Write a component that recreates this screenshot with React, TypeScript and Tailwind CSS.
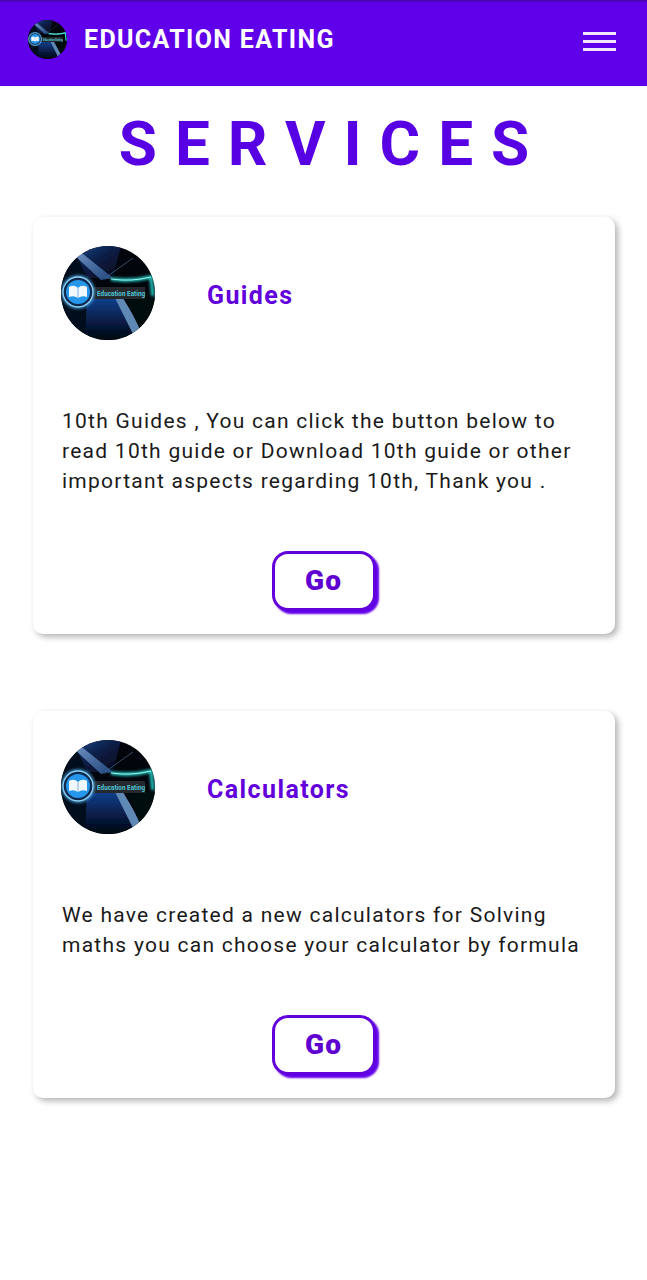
const services = [
  {
    title: 'Guides',
    lines: [
      '10th Guides , You can click the button below to',
      'read 10th guide or Download 10th guide or other',
      'important aspects regarding 10th, Thank you .',
    ],
  },
  {
    title: 'Calculators',
    lines: [
      'We have created a new calculators for Solving',
      'maths you can choose your calculator by formula',
    ],
  },
]

// Round site logo: dark panels, glowing book badge and name plate
function Logo({ id, className }: { id: string; className: string }) {
  return (
    <svg viewBox="0 0 94 94" className={className}>
      <defs>
        <clipPath id={`${id}-clip`}>
          <circle cx="47" cy="47" r="47" />
        </clipPath>
        <linearGradient id={`${id}-top`} x1="0" y1="0" x2="1" y2="1">
          <stop offset="0" stopColor="#1d4a8c" />
          <stop offset="0.5" stopColor="#0a1c44" />
          <stop offset="1" stopColor="#040814" />
        </linearGradient>
        <linearGradient id={`${id}-low`} x1="0" y1="0" x2="0" y2="1">
          <stop offset="0" stopColor="#12408c" />
          <stop offset="0.6" stopColor="#071a40" />
          <stop offset="1" stopColor="#02050f" />
        </linearGradient>
        <linearGradient id={`${id}-stripe`} x1="0" y1="0" x2="1" y2="1">
          <stop offset="0" stopColor="#7f9fd0" />
          <stop offset="1" stopColor="#24508c" />
        </linearGradient>
        <filter id={`${id}-glow`} x="-30%" y="-30%" width="160%" height="160%">
          <feGaussianBlur stdDeviation="1.4" />
        </filter>
        <filter id={`${id}-soft`} x="-10%" y="-10%" width="120%" height="120%">
          <feGaussianBlur stdDeviation="0.5" />
        </filter>
      </defs>
      <g clipPath={`url(#${id}-clip)`}>
        <rect width="94" height="94" fill="#03050c" />
        <g filter={`url(#${id}-soft)`}>
          <polygon points="10,0 60,0 52,32 24,32" fill={`url(#${id}-top)`} />
          <polygon points="0,20 16,10 40,60 28,94 0,94" fill="#040a1c" />
          <polygon points="26,52 58,52 76,94 24,94" fill={`url(#${id}-low)`} />
          <polygon points="12,8 22,8 52,32 40,34" fill={`url(#${id}-stripe)`} opacity="0.85" />
          <polygon points="54,52 62,52 82,86 74,92" fill="#5f88b4" />
          <polygon points="64,52 94,52 94,94 84,94" fill="#04070f" />
        </g>
        <path d="M44 32 L72 12" stroke="#4a6a86" strokeWidth="0.7" />
        <path d="M50 33 Q70 36 90 31 L92 50" fill="none" stroke="#28e0d8" strokeWidth="3" filter={`url(#${id}-glow)`} />
        <path d="M50 33 Q70 36 90 31" fill="none" stroke="#a8fff6" strokeWidth="0.9" />
        <path d="M68 56 L88 56" fill="none" stroke="#18a8b8" strokeWidth="1.6" filter={`url(#${id}-glow)`} />
        <rect x="30" y="41" width="54" height="12" fill="#25292d" />
        <text x="36" y="49.5" fontSize="6.4" fontWeight="700" fontFamily="Roboto, sans-serif" fill="#4fc4d4">
          Education Eating
        </text>
        <circle cx="17" cy="46" r="17" fill="#4db4f2" opacity="0.7" filter={`url(#${id}-glow)`} />
        <circle cx="17" cy="46" r="15" fill="#0f2a4e" stroke="#8fcdf5" strokeWidth="1.4" />
        <circle cx="17" cy="46" r="12" fill="#2596ea" />
        <path d="M8 41 Q13 38 17 42 Q21 38 26 41 V51 Q21 49 17 52 Q13 49 8 51 Z" fill="#f2f8ff" />
        <path d="M17 42 V52" stroke="#7eb4e4" strokeWidth="1" />
        <path d="M17 62 V80" stroke="#8fc8f0" strokeWidth="1.6" opacity="0.6" filter={`url(#${id}-soft)`} />
      </g>
    </svg>
  )
}

export default function App() {
  return (
    <div className="min-h-[1280px] bg-white font-['Roboto',sans-serif]">
      {/* Header */}
      <header className="flex h-[86px] items-start justify-between border-t-2 border-[#4a06b8] bg-[#6000ea] pl-[28px] pr-[31px]">
        <div className="mt-[17px] flex items-center gap-[17px]">
          <Logo id="nav" className="h-[39px] w-[39px]" />
          <span className="pt-[1px] text-[25px] leading-[39px] font-bold tracking-[1.35px] text-white">
            EDUCATION EATING
          </span>
        </div>
        <div className="mt-[30px] flex w-[33px] flex-col gap-[5px]">
          <span className="h-[3px] bg-[#f1e6fd]" />
          <span className="h-[3px] bg-[#f1e6fd]" />
          <span className="h-[3px] bg-[#f1e6fd]" />
        </div>
      </header>

      <main className="pl-[33px] pr-[32px]">
        <h1 className="mt-[22px] mb-[38px] pl-[18px] text-center text-[62px] leading-[71px] font-bold tracking-[18px] text-[#5800e4]">
          SERVICES
        </h1>

        <div className="flex flex-col gap-[77px]">
          {services.map((service, i) => (
            <section
              key={service.title}
              className="rounded-[10px] bg-white pl-[28px] pr-[29px] pt-[29px] pb-[23px] shadow-[3px_3px_6px_rgba(0,0,0,0.3)]"
            >
              <div className="flex items-center gap-[52px]">
                <Logo id={`card-${i}`} className="h-[94px] w-[94px] shrink-0" />
                <h2 className="pt-[6px] text-[25px] font-bold tracking-[1.4px] text-[#6200dc]">{service.title}</h2>
              </div>
              <p className="mt-[66px] pl-[1px] text-[21px] leading-[30px] tracking-[1.26px] text-[#1a1a1a]">
                {service.lines.map(line => (
                  <span key={line} className="block whitespace-nowrap">
                    {line}
                  </span>
                ))}
              </p>
              <div className="mt-[55px] flex justify-center">
                <button className="h-[60px] w-[104px] rounded-[16px] border-[3px] border-[#6200dc] bg-white text-[28px] font-black tracking-[1px] text-[#5f00d0] shadow-[3px_3px_2px_#6200ea]">
                  Go
                </button>
              </div>
            </section>
          ))}
        </div>
      </main>
    </div>
  )
}
